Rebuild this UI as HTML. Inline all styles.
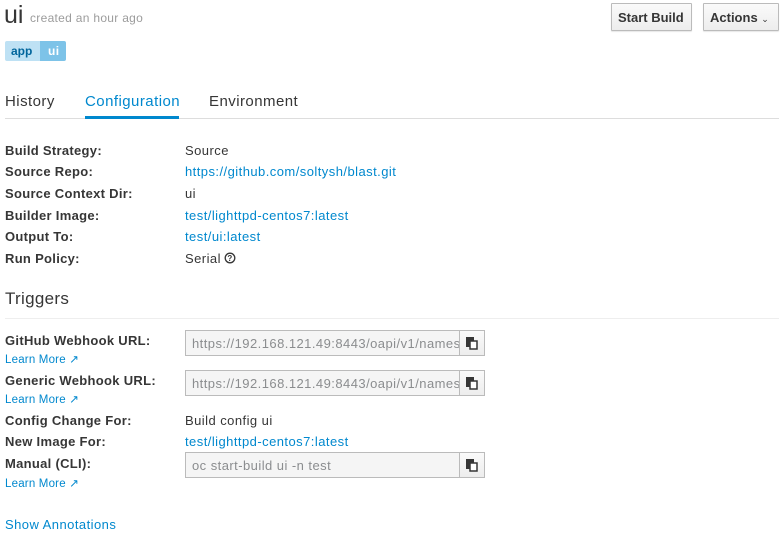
<!DOCTYPE html>
<html><head><meta charset="utf-8"><style>
*{box-sizing:border-box;margin:0;padding:0}
body{width:783px;height:540px;background:#fff;font-family:"Liberation Sans",sans-serif;font-size:13px;color:#363636;position:relative;overflow:hidden;letter-spacing:0.45px}
.a{position:absolute;white-space:nowrap}
.lbl{font-weight:bold;left:5px;letter-spacing:0.3px}
.val{left:185px}
.link{color:#0088ce}
.lm{font-size:11.5px;color:#0088ce;left:5px;letter-spacing:0.2px}
.inp{position:absolute;left:185px;width:275px;height:26px;background:#f5f5f5;border:1px solid #bbb;color:#8b8d8f;font-size:13px;padding:5px 6px;overflow:hidden;white-space:nowrap}
.cb{position:absolute;left:459px;width:26px;height:26px;background:linear-gradient(#fafafa,#ededed);border:1px solid #bbb}
.btn{position:absolute;top:3px;height:28px;border:1px solid #bbb;background:linear-gradient(#fafafa,#ededed);font-size:13px;font-weight:bold;color:#363636;padding:6px 6px;border-radius:1px;box-shadow:0 1px 1px rgba(0,0,0,.1);letter-spacing:0}
</style></head><body>
<div class="a" style="left:4px;top:1px;font-size:25px;color:#363636;letter-spacing:0">ui</div>
<div class="a" style="left:30px;top:11px;font-size:12px;color:#9c9c9c;letter-spacing:0.3px">created an hour ago</div>
<div class="btn" style="left:611px;width:81px">Start Build</div>
<div class="btn" style="left:703px;width:76px">Actions <span style="font-size:9px;font-weight:normal">&#8964;</span></div>
<div class="a" style="left:5px;top:41px;width:35px;height:20px;background:#bee1f4;border-radius:2px 0 0 2px;color:#00659c;font-size:12px;padding:3px 0 0 6px;font-weight:bold;letter-spacing:0">app</div>
<div class="a" style="left:40px;top:41px;width:26px;height:20px;background:#7dc3e8;border-radius:0 2px 2px 0;color:#fff;font-size:12px;padding:3px 0 0 8px;font-weight:bold">ui</div>
<div class="a" style="left:5px;top:93px;font-size:15px">History</div>
<div class="a" style="left:85px;top:93px;font-size:15px;color:#0088ce">Configuration</div>
<div class="a" style="left:209px;top:93px;font-size:15px">Environment</div>
<div class="a" style="left:5px;top:118px;width:774px;height:1px;background:#ddd"></div>
<div class="a" style="left:85px;top:116px;width:94px;height:3px;background:#0088ce"></div>

<div class="a lbl" style="top:143px">Build Strategy:</div><div class="a val" style="top:143px">Source</div>
<div class="a lbl" style="top:164px">Source Repo:</div><div class="a val link" style="top:164px">https://github.com/soltysh/blast.git</div>
<div class="a lbl" style="top:186px">Source Context Dir:</div><div class="a val" style="top:186px">ui</div>
<div class="a lbl" style="top:208px">Builder Image:</div><div class="a val link" style="top:208px">test/lighttpd-centos7:latest</div>
<div class="a lbl" style="top:229px">Output To:</div><div class="a val link" style="top:229px">test/ui:latest</div>
<div class="a lbl" style="top:251px">Run Policy:</div><div class="a val" style="top:251px">Serial</div>
<svg class="a" style="left:224px;top:252px" width="12" height="12"><circle cx="6" cy="6" r="4.8" fill="none" stroke="#363636" stroke-width="1.3"/><text x="6" y="9" font-size="8" font-weight="bold" text-anchor="middle" fill="#363636" font-family="Liberation Sans">?</text></svg>

<div class="a" style="left:5px;top:289px;font-size:17px;letter-spacing:0.3px">Triggers</div>
<div class="a" style="left:5px;top:318px;width:774px;height:1px;background:#eee"></div>

<div class="a lbl" style="top:333px">GitHub Webhook URL:</div>
<div class="a lm" style="top:352px">Learn More &#x2197;</div>
<div class="inp" style="top:330px">https://192.168.121.49:8443/oapi/v1/namespaces</div><div class="cb" style="top:330px"></div>
<div class="a lbl" style="top:373px">Generic Webhook URL:</div>
<div class="a lm" style="top:392px">Learn More &#x2197;</div>
<div class="inp" style="top:370px">https://192.168.121.49:8443/oapi/v1/namespaces</div><div class="cb" style="top:370px"></div>
<div class="a lbl" style="top:413px">Config Change For:</div><div class="a val" style="top:413px">Build config ui</div>
<div class="a lbl" style="top:434px">New Image For:</div><div class="a val link" style="top:434px">test/lighttpd-centos7:latest</div>
<div class="a lbl" style="top:456px">Manual (CLI):</div>
<div class="a lm" style="top:476px">Learn More &#x2197;</div>
<div class="inp" style="top:452px">oc start-build ui -n test</div><div class="cb" style="top:452px"></div>
<div class="a link" style="left:5px;top:517px">Show Annotations</div>
<svg class="a" style="left:465px;top:336px" width="14" height="14"><rect x="1" y="1" width="8" height="10" fill="#363636"/><rect x="5" y="5" width="7" height="8" fill="#fff" stroke="#363636" stroke-width="1.5"/></svg>
<svg class="a" style="left:465px;top:376px" width="14" height="14"><rect x="1" y="1" width="8" height="10" fill="#363636"/><rect x="5" y="5" width="7" height="8" fill="#fff" stroke="#363636" stroke-width="1.5"/></svg>
<svg class="a" style="left:465px;top:458px" width="14" height="14"><rect x="1" y="1" width="8" height="10" fill="#363636"/><rect x="5" y="5" width="7" height="8" fill="#fff" stroke="#363636" stroke-width="1.5"/></svg>
</body></html>
